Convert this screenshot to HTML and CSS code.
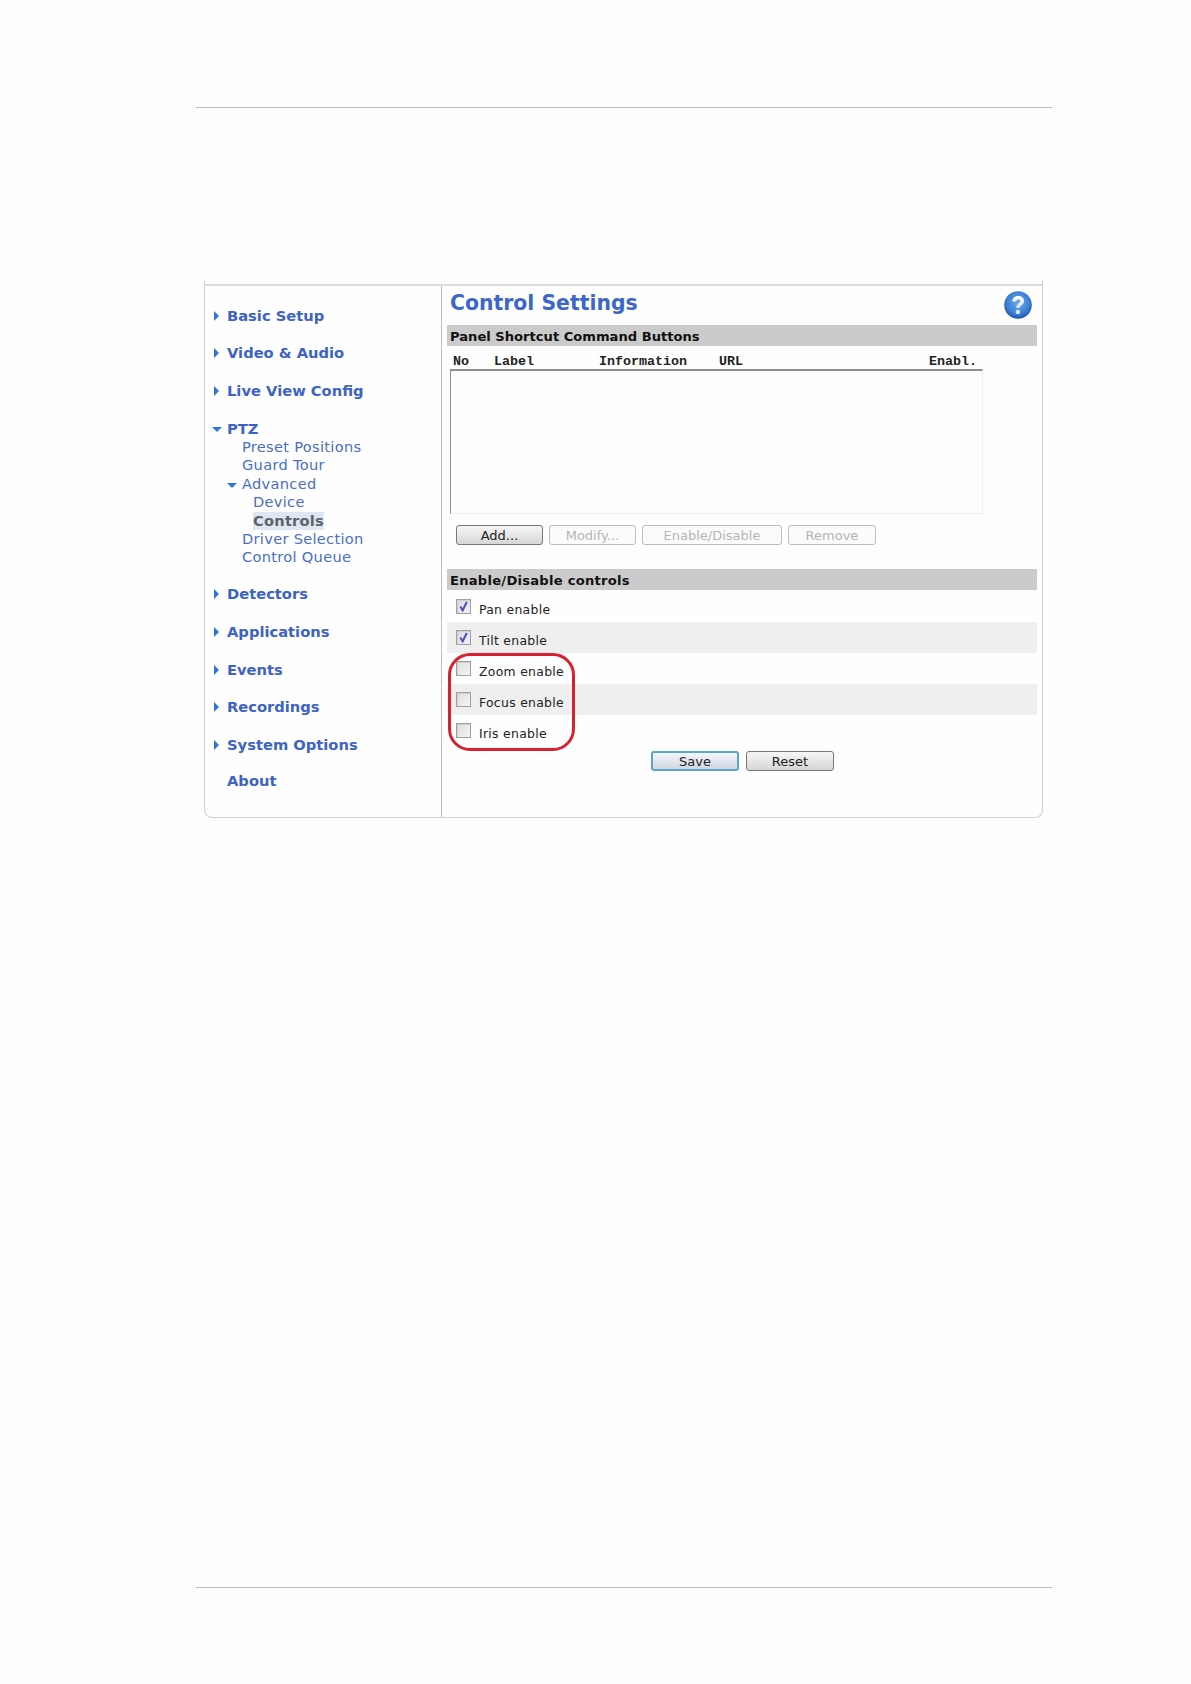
FILE: index.html
```html
<!DOCTYPE html>
<html lang="en">
<head>
<meta charset="utf-8">
<title>Control Settings</title>
<link rel="stylesheet" href="styles.css">
</head>
<body>
<div class="page">
  <hr class="rule rule-top">
  <div class="panel">
    <nav class="nav">
      <a class="nav-main m-basic"><i class="tri-r"></i>Basic Setup</a>
      <a class="nav-main m-video"><i class="tri-r"></i>Video &amp; Audio</a>
      <a class="nav-main m-live"><i class="tri-r"></i>Live View Config</a>
      <a class="nav-main m-ptz"><i class="tri-d"></i>PTZ</a>
      <div class="sub">
        <a class="sub-item">Preset Positions</a>
        <a class="sub-item">Guard Tour</a>
        <a class="sub-item"><i class="tri-d small"></i>Advanced</a>
        <a class="sub-item deep">Device</a>
        <a class="sub-item deep"><span class="current">Controls</span></a>
        <a class="sub-item">Driver Selection</a>
        <a class="sub-item">Control Queue</a>
      </div>
      <a class="nav-main m-det"><i class="tri-r"></i>Detectors</a>
      <a class="nav-main m-app"><i class="tri-r"></i>Applications</a>
      <a class="nav-main m-evt"><i class="tri-r"></i>Events</a>
      <a class="nav-main m-rec"><i class="tri-r"></i>Recordings</a>
      <a class="nav-main m-sys"><i class="tri-r"></i>System Options</a>
      <a class="nav-main m-about">About</a>
    </nav>
    <main class="content">
      <header class="title-row">
        <h1 class="title">Control Settings</h1>
        <svg class="help" width="30" height="30" viewBox="0 0 30 30" aria-hidden="true">
          <defs>
            <radialGradient id="helpfill" cx="0.5" cy="0.42" r="0.58">
              <stop offset="0" stop-color="#6ea6e6"/>
              <stop offset="0.65" stop-color="#3f86d8"/>
              <stop offset="1" stop-color="#1c55a8"/>
            </radialGradient>
            <linearGradient id="helpmark" x1="0" y1="0" x2="0" y2="1">
              <stop offset="0" stop-color="#ffffff"/>
              <stop offset="1" stop-color="#cfe0f4"/>
            </linearGradient>
          </defs>
          <circle cx="15" cy="15" r="13.8" fill="url(#helpfill)"/>
          <path d="M9.2 11.4c.3-3.4 2.8-5.4 6-5.4 3.4 0 5.8 2 5.8 4.9 0 2.4-1.3 3.5-2.7 4.5-1.1.8-1.5 1.3-1.5 2.6h-3.5c0-2.5.8-3.5 2.2-4.6 1.1-.8 1.7-1.3 1.7-2.3 0-1-.7-1.7-1.9-1.7s-2 .8-2.2 2z" fill="url(#helpmark)"/>
          <circle cx="14.9" cy="22" r="2.2" fill="#dbe8f7"/>
        </svg>
      </header>
      <h2 class="bar">Panel Shortcut Command Buttons</h2>
      <div class="cols">
        <span class="col-no">No</span>
        <span class="col-label">Label</span>
        <span class="col-info">Information</span>
        <span class="col-url">URL</span>
        <span class="col-en">Enabl.</span>
      </div>
      <div class="listbox"></div>
      <div class="btn-row">
        <button class="btn b-add">Add...</button>
        <button class="btn off b-mod">Modify...</button>
        <button class="btn off b-ena">Enable/Disable</button>
        <button class="btn off b-rem">Remove</button>
      </div>
      <h2 class="bar bar-second">Enable/Disable controls</h2>
      <div class="rows">
        <div class="row"><span class="box on"><svg width="11" height="11" viewBox="0 0 11 11"><path d="M2.3 5.5l2.4 3.8L8.8 1" fill="none" stroke="#4a50b4" stroke-width="2"/></svg></span><span class="row-label">Pan enable</span></div>
        <div class="row alt"><span class="box on"><svg width="11" height="11" viewBox="0 0 11 11"><path d="M2.3 5.5l2.4 3.8L8.8 1" fill="none" stroke="#4a50b4" stroke-width="2"/></svg></span><span class="row-label">Tilt enable</span></div>
        <div class="row"><span class="box"></span><span class="row-label">Zoom enable</span></div>
        <div class="row alt"><span class="box"></span><span class="row-label">Focus enable</span></div>
        <div class="row"><span class="box"></span><span class="row-label">Iris enable</span></div>
        <div class="highlight"></div>
      </div>
      <div class="save-row">
        <button class="btn primary b-save">Save</button>
        <button class="btn b-reset">Reset</button>
      </div>
    </main>
  </div>
  <hr class="rule rule-bottom">
</div>
</body>
</html>
```

FILE: styles.css
```css
* { box-sizing: border-box; }
html, body { margin: 0; padding: 0; background: #fefefe; }
body { font-family: "DejaVu Sans", sans-serif; height: 1684px; overflow: hidden; }
.page { padding: 107px 139px 0 196px; }
.rule { border: 0; height: 1px; background: #bdbdbd; margin: 0; }
.rule-bottom { margin-top: 769px; }

.panel {
  position: relative;
  margin: 176px 9px 0 8px;
  height: 534px;
  display: grid;
  grid-template-columns: 237px 1fr;
  border: 1px solid #cfcfcf;
  border-top: 2px solid #dcdcdc;
  border-radius: 0 0 8px 8px;
}
.panel::before, .panel::after {
  content: "";
  position: absolute;
  top: -5px;
  width: 1px;
  height: 4px;
  background: #cfcfcf;
}
.panel::before { left: -1px; }
.panel::after { right: -1px; }

.nav { border-right: 1px solid #bdbdbd; padding: 21px 0 0 22px; }
.nav-main {
  display: block;
  position: relative;
  color: #3d63c4;
  font-weight: 700;
  font-size: 14.7px;
  line-height: 18px;
}
.m-video { margin-top: 19px; }
.m-live { margin-top: 20px; }
.m-ptz { margin-top: 20px; }
.m-det { margin-top: 18.5px; }
.m-app { margin-top: 20px; }
.m-evt { margin-top: 20px; }
.m-rec { margin-top: 18.5px; }
.m-sys { margin-top: 20px; }
.m-about { margin-top: 18.5px; }

.tri-r, .tri-d { position: absolute; width: 0; height: 0; display: block; }
.tri-r {
  left: -13px; top: 4px;
  border-left: 5px solid #2d78d6;
  border-top: 5px solid transparent;
  border-bottom: 5px solid transparent;
}
.tri-d {
  left: -15px; top: 7px;
  border-top: 5px solid #2d78d6;
  border-left: 5px solid transparent;
  border-right: 5px solid transparent;
}
.tri-d.small { left: -15px; top: 8px; }

.sub { margin-left: 15px; }
.sub-item {
  display: block;
  position: relative;
  color: #4a6fc4;
  font-size: 14.6px;
  letter-spacing: 0.3px;
  line-height: 18.4px;
}
.deep { margin-left: 11px; }
.current {
  color: #5e6468;
  font-weight: 700;
  background: #dfe8f2;
  display: inline-block;
  letter-spacing: 0.25px;
}

.content { padding: 0 5px 0 5px; min-width: 0; }
.title-row { display: flex; justify-content: space-between; height: 39px; padding: 3px 4px 0 3px; }
.title { margin: 0; color: #3c66c8; font-size: 20.4px; line-height: 28px; font-weight: 700; }
.help { margin-top: 1px; }

.bar {
  margin: 0;
  height: 21px;
  background: #cbcbcb;
  color: #111;
  font-size: 13.1px;
  line-height: 23px;
  font-weight: 700;
  padding-left: 3px;
}
.bar-second { margin-top: 24px; line-height: 23px; letter-spacing: 0.25px; }

.cols {
  display: grid;
  grid-template-columns: 41px 105px 120px 210px 1fr;
  height: 23px;
  padding: 7.5px 0 0 6px;
  font-family: "Liberation Mono", monospace;
  font-weight: 700;
  font-size: 13.33px;
  line-height: 15px;
  color: #222;
}

.listbox {
  width: 533px;
  height: 145px;
  margin-left: 3px;
  border-top: 2px solid #8f8f8f;
  border-left: 1px solid #8f8f8f;
  border-right: 1px solid #efefef;
  border-bottom: 1px solid #efefef;
}

.btn-row { display: flex; gap: 6px; margin: 11px 0 0 9px; }
.btn {
  height: 20px;
  padding: 0;
  font-family: "DejaVu Sans", sans-serif;
  font-size: 13px;
  line-height: 17px;
  color: #222;
  border: 1px solid #777;
  border-radius: 3px;
  background: linear-gradient(#f6f6f6, #d6d6d6);
}
.off { color: #b5b5b5; border-color: #bdbdbd; background: #fbfbfb; }
.b-add, .b-mod { width: 87px; }
.b-rem { width: 88px; }
.b-ena { width: 140px; }
.b-save { width: 88px; }
.b-reset { width: 88px; }
.primary { border: 2px solid #58a9c9; background: linear-gradient(#f3f6fa, #d2d6e0); line-height: 15px; }

.rows { position: relative; margin-top: 1px; }
.row { display: flex; height: 31px; padding-left: 9px; }
.alt { background: #efefef; }
.box {
  width: 15px;
  height: 15px;
  margin-top: 7.5px;
  border: 1px solid #a0a0a0;
  box-shadow: inset 1px 1px 0 #cfcfcf;
  background: linear-gradient(135deg, #dcdcdc, #f6f6f6);
  display: flex;
  align-items: center;
  justify-content: center;
}
.box.on { background: linear-gradient(135deg, #d8d8e6, #f0f0f8); }
.row-label { margin: 11px 0 0 8px; font-size: 12.4px; line-height: 16px; color: #222; letter-spacing: 0.3px; }
.highlight {
  position: absolute;
  left: 1px;
  top: 62px;
  width: 127px;
  height: 98px;
  border: 3px solid #d8202f;
  border-radius: 22px;
}

.save-row { display: flex; gap: 7px; margin: 5px 0 0 204px; }
```
